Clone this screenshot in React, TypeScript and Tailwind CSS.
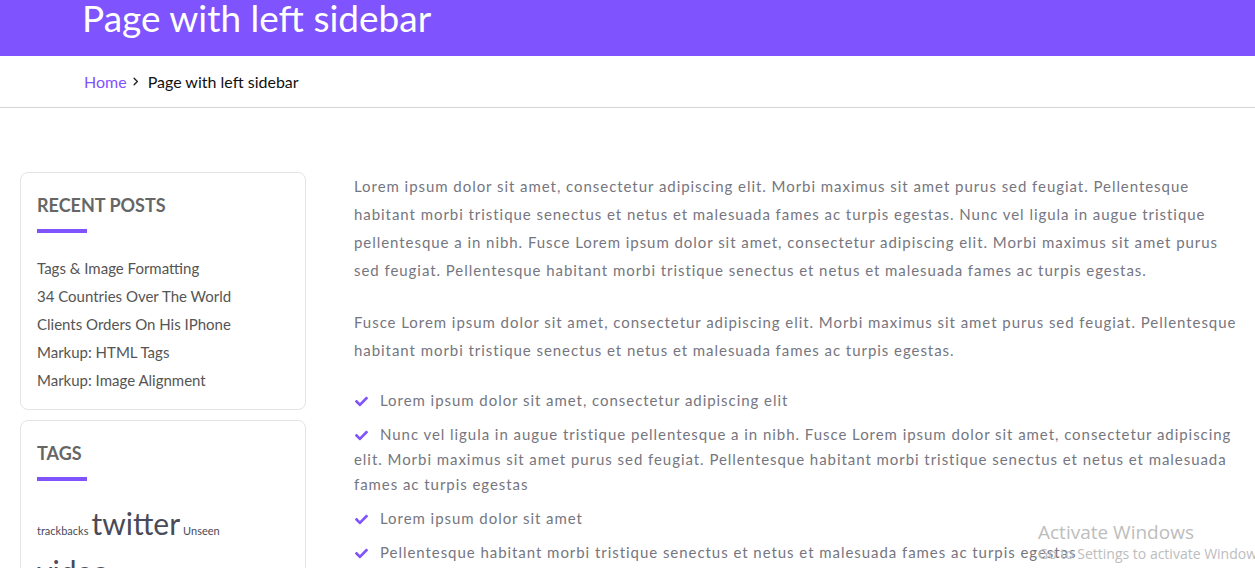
import React from "react";

const Check = () => (
  <svg viewBox="0 0 512 512" className="inline-block w-[13px] h-[13px] ml-[1px] mr-[12px] -mt-[2px] align-middle" fill="#7f53fd">
    <path d="M173.898 439.404l-166.4-166.4c-9.997-9.997-9.997-26.206 0-36.204l36.203-36.204c9.997-9.998 26.207-9.998 36.204 0L192 312.69 432.095 72.596c9.997-9.997 26.207-9.997 36.204 0l36.203 36.204c9.997 9.997 9.997 26.206 0 36.204l-294.4 294.401c-9.998 9.997-26.207 9.997-36.204-.001z" />
  </svg>
);

const Heading = ({ children }: { children: React.ReactNode }) => (
  <div>
    <h3 className="text-[18px] font-bold leading-[22px] text-[#666666] uppercase">{children}</h3>
    <div className="mt-[13px] h-[4px] w-[50px] bg-[#7f53fd]" />
  </div>
);

export default function App() {
  const posts = [
    "Tags & Image Formatting",
    "34 Countries Over The World",
    "Clients Orders On His IPhone",
    "Markup: HTML Tags",
    "Markup: Image Alignment",
  ];
  return (
    <div className="relative w-[1255px] h-[568px] overflow-hidden bg-white font-['Lato',sans-serif]">
      <header className="h-[56px] bg-[#7f53fd] pl-[82px]">
        <h1 className="text-[37px] leading-[36px] text-white font-normal">Page with left sidebar</h1>
      </header>
      <nav className="h-[52px] border-b border-[#d4d4d4] pl-[84px] flex items-center text-[16px]">
        <span className="text-[#7f53fd]">Home</span>
        <svg viewBox="0 0 24 24" className="w-[11px] h-[11px] ml-[3px] mr-[7px]" fill="none" stroke="#222" strokeWidth="3" strokeLinecap="round" strokeLinejoin="round">
          <path d="M9 5l7 7-7 7" />
        </svg>
        <span className="text-[#111]">Page with left sidebar</span>
      </nav>
      <div className="flex pt-[64px] pl-[20px]">
        <aside className="w-[286px] flex flex-col gap-[10px] shrink-0">
          <div className="border border-[#e4e4e4] rounded-[8px] px-4 pt-[21px] pb-[15px]">
            <Heading>Recent Posts</Heading>
            <ul className="mt-[21px] text-[15px] leading-[28px] text-[#555555]">
              {posts.map((p) => (
                <li key={p}>{p}</li>
              ))}
            </ul>
          </div>
          <div className="border border-[#e4e4e4] rounded-[8px] px-4 pt-[21px] pb-[15px] h-[200px]">
            <Heading>Tags</Heading>
            <div className="mt-[24px] flex flex-wrap items-baseline gap-x-[3px] gap-y-[12px] text-[#4a4a58]">
              <span className="text-[11px] leading-[14px]">trackbacks</span>
              <span className="text-[30px] leading-[36px]">twitter</span>
              <span className="text-[11px] leading-[14px]">Unseen</span>
              <span className="w-full text-[30px] leading-[36px]">video</span>
            </div>
          </div>
        </aside>
        <main className="ml-[48px] w-[886px] text-[15px] tracking-[0.95px] text-[#767680]">
          <p className="leading-[28px] mb-[24px]">
            Lorem ipsum dolor sit amet, consectetur adipiscing elit. Morbi maximus sit amet purus sed feugiat. Pellentesque habitant morbi tristique senectus et netus et malesuada fames ac turpis egestas. Nunc vel ligula in augue tristique pellentesque a in nibh. Fusce Lorem ipsum dolor sit amet, consectetur adipiscing elit. Morbi maximus sit amet purus sed feugiat. Pellentesque habitant morbi tristique senectus et netus et malesuada fames ac turpis egestas.
          </p>
          <p className="leading-[28px] mb-[24px]">
            Fusce Lorem ipsum dolor sit amet, consectetur adipiscing elit. Morbi maximus sit amet purus sed feugiat. Pellentesque habitant morbi tristique senectus et netus et malesuada fames ac turpis egestas.
          </p>
          <ul className="leading-[25px]">
            <li className="mb-[9px]"><Check />Lorem ipsum dolor sit amet, consectetur adipiscing elit</li>
            <li className="mb-[9px]"><Check />Nunc vel ligula in augue tristique pellentesque a in nibh. Fusce Lorem ipsum dolor sit amet, consectetur adipiscing elit. Morbi maximus sit amet purus sed feugiat. Pellentesque habitant morbi tristique senectus et netus et malesuada fames ac turpis egestas</li>
            <li className="mb-[9px]"><Check />Lorem ipsum dolor sit amet</li>
            <li className="mb-[9px]"><Check />Pellentesque habitant morbi tristique senectus et netus et malesuada fames ac turpis egestas</li>
          </ul>
        </main>
      </div>
      <div className="absolute left-[1038px] top-[519px] font-['Open_Sans',sans-serif] text-[#bdbdbd] whitespace-nowrap pointer-events-none">
        <div className="text-[19px] leading-[26px]">Activate Windows</div>
        <div className="text-[14px] leading-[18px]">Go to Settings to activate Windows.</div>
      </div>
    </div>
  );
}
